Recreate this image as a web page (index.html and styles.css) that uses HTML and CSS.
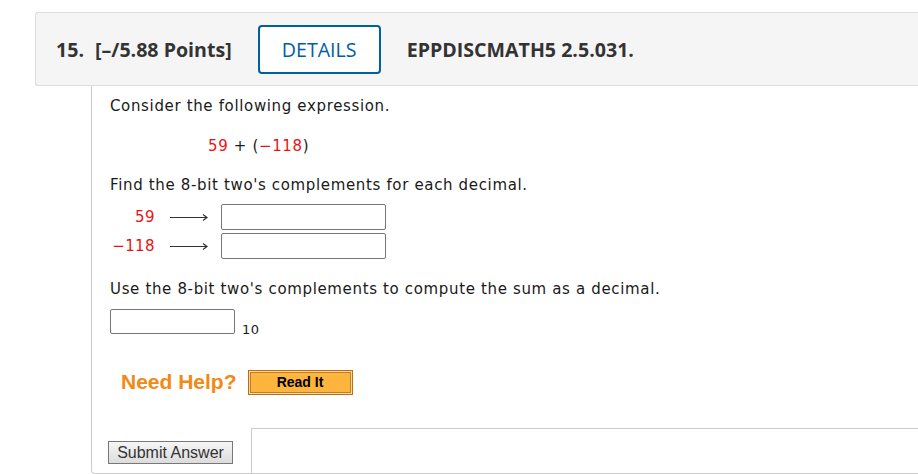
FILE: index.html
```html
<!DOCTYPE html>
<html lang="en">
<head>
<meta charset="utf-8">
<title>Question 15</title>
<link rel="stylesheet" href="styles.css">
</head>
<body>
<div class="question">
  <div class="q-header">
    <span class="q-num">15.</span>
    <span class="q-points">[–/5.88 Points]</span>
    <button class="details-btn">DETAILS</button>
    <span class="q-code">EPPDISCMATH5 2.5.031.</span>
  </div>
  <div class="q-body">
    <p class="line">Consider the following expression.</p>
    <p class="line math"><span class="red">59</span> + (<span class="red">−118</span>)</p>
    <p class="line find">Find the 8-bit two's complements for each decimal.</p>
    <div class="conv-rows">
      <div class="conv-row">
        <span class="conv-label red">59</span>
        <svg class="arrow" width="38" height="10" viewBox="0 0 38 10"><path d="M0 5.5H36.5M33 2.5L37 5.5L33 8.5" fill="none" stroke="#333" stroke-width="1.2"/></svg>
        <span class="answer-box wide"></span>
      </div>
      <div class="conv-row">
        <span class="conv-label red">−118</span>
        <svg class="arrow" width="38" height="10" viewBox="0 0 38 10"><path d="M0 5.5H36.5M33 2.5L37 5.5L33 8.5" fill="none" stroke="#333" stroke-width="1.2"/></svg>
        <span class="answer-box wide"></span>
      </div>
    </div>
    <p class="line use">Use the 8-bit two's complements to compute the sum as a decimal.</p>
    <div class="sum-row">
      <span class="answer-box narrow"></span>
      <span class="base">10</span>
    </div>
    <div class="help-row">
      <span class="need-help">Need Help?</span>
      <span class="read-it"><span class="read-it-inner">Read It</span></span>
    </div>
    <div class="submit-row">
      <button class="submit-btn">Submit Answer</button>
      <div class="after-box"></div>
    </div>
  </div>
</div>
</body>
</html>
```

FILE: styles.css
```css
html, body {
  margin: 0;
  padding: 0;
  background: #fff;
  overflow: hidden;
}

.question {
  padding-top: 12px;
  margin-left: 35px;
}

.q-header {
  height: 72px;
  display: flex;
  align-items: center;
  background: #f5f5f5;
  border: 1px solid #dddddd;
  border-right: none;
  border-radius: 3px 0 0 3px;
  padding-left: 20px;
  font-family: "Open Sans", "Liberation Sans", sans-serif;
  color: #333;
  font-size: 19.6px;
}

.q-num {
  font-weight: 700;
  margin-right: 11px;
}

.q-points {
  font-weight: 700;
  margin-right: 26px;
}

.details-btn {
  box-sizing: border-box;
  width: 123px;
  height: 49px;
  border: 2px solid #00609c;
  border-radius: 4px;
  background: #fff;
  color: #00609c;
  font-family: "Open Sans", "Liberation Sans", sans-serif;
  font-size: 19.6px;
  padding: 0;
  margin-right: 26px;
}

.q-code {
  font-weight: 700;
}

.q-body {
  margin-left: 56px;
  border-left: 1px solid #cccccc;
  border-bottom: 1px solid #cccccc;
  border-bottom-left-radius: 4px;
  padding: 10px 0 0 18px;
  font-family: "DejaVu Sans", Verdana, sans-serif;
  font-size: 15px;
  letter-spacing: 0.65px;
  color: #1a1a1a;
}

.line {
  margin: 0;
  line-height: 20px;
}

.math {
  margin-top: 20px;
  margin-left: 98px;
}

.find {
  margin-top: 19px;
}

.red {
  color: #ee1111;
}

.conv-rows {
  margin-top: 9px;
  display: flex;
  flex-direction: column;
  gap: 3px;
}

.conv-row {
  display: flex;
  align-items: center;
  height: 26px;
}

.conv-label {
  width: 45px;
  text-align: right;
  letter-spacing: 0.4px;
}

.arrow {
  margin-left: 15px;
  margin-right: 13px;
}

.answer-box {
  box-sizing: border-box;
  display: block;
  border: 1px solid #767676;
  border-radius: 2px;
  background: #fff;
}

.answer-box.wide {
  width: 165px;
  height: 26px;
}

.use {
  margin-top: 20px;
}

.sum-row {
  margin-top: 10px;
  display: flex;
  align-items: flex-end;
}

.answer-box.narrow {
  width: 125px;
  height: 25px;
}

.base {
  font-size: 13px;
  line-height: 13px;
  letter-spacing: 0.4px;
  margin-left: 7px;
  margin-bottom: -2px;
}

.help-row {
  margin-top: 35px;
  margin-left: 11px;
  display: flex;
  align-items: center;
  height: 26px;
  letter-spacing: 0;
}

.need-help {
  font-family: "Liberation Sans", Arial, sans-serif;
  font-weight: 700;
  font-size: 21px;
  color: #f08a14;
  margin-right: 11px;
}

.read-it {
  box-sizing: border-box;
  display: block;
  width: 105px;
  height: 25px;
  border: 1px solid #c06d1a;
  padding: 1px;
  background: #ffd98c;
}

.read-it-inner {
  box-sizing: border-box;
  display: flex;
  align-items: center;
  justify-content: center;
  height: 100%;
  border: 1px solid #b9803a;
  background: #fdb53d;
  font-family: "Liberation Sans", Arial, sans-serif;
  font-weight: 700;
  font-size: 14px;
  color: #000;
}

.submit-row {
  margin-top: 33px;
  display: flex;
  height: 45px;
  letter-spacing: 0;
}

.submit-btn {
  box-sizing: border-box;
  margin-top: 13px;
  margin-left: -2px;
  width: 125px;
  height: 23px;
  border: 1px solid #777;
  background: linear-gradient(#f6f6f6, #dcdcdc);
  font-family: "Liberation Sans", Arial, sans-serif;
  font-size: 16px;
  color: #333;
  padding: 0;
}

.after-box {
  flex: 1;
  margin-left: 18px;
  border-top: 1px solid #cccccc;
  border-left: 1px solid #cccccc;
}
```
